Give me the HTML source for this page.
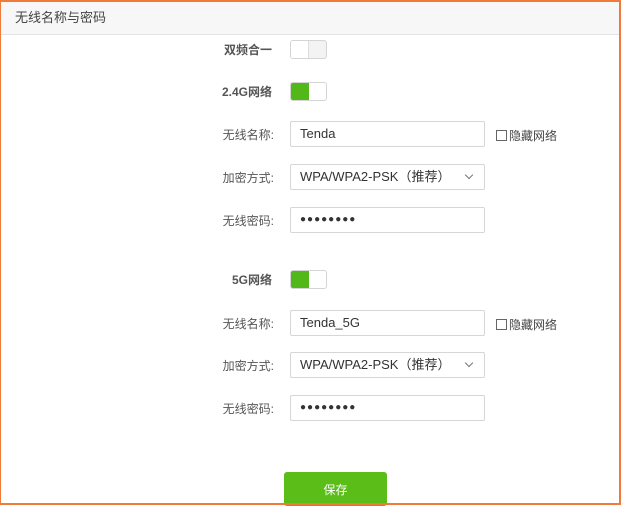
<!DOCTYPE html><html><head><meta charset="utf-8"><style>
*{box-sizing:border-box;margin:0;padding:0}
body{width:621px;height:505px;overflow:hidden;background:#fff;font-family:"Liberation Sans","Noto Sans CJK SC",sans-serif;position:relative}
.frame{position:absolute;left:0;top:0;width:621px;height:505px;border:2px solid #f07a3a;border-left-width:1px}
.hd{position:absolute;left:1px;top:2px;width:618px;height:33px;background:#f7f7f7;border-bottom:1px solid #e4e4e4;font-size:13px;color:#444;line-height:31px;padding-left:14px}
.lb{position:absolute;right:349px;font-size:12px;color:#555;text-align:right;white-space:nowrap}
.b{font-weight:bold;color:#555}
.tg{position:absolute;left:290px;width:37px;height:19px;border:1px solid #d4d4d4;border-radius:3px;background:#f3f3f3}
.tg i{position:absolute;left:0;top:0;width:18px;height:17px;background:#fff;border-right:1px solid #ddd;border-radius:2px 0 0 2px}
.tg.on{background:#fff}.tg.on i{background:#52b81a;border:none}
.in{position:absolute;left:290px;width:195px;height:26px;border:1px solid #d6d6d6;border-radius:2px;font-size:13px;color:#333;line-height:24px;padding-left:9px}
.dots{letter-spacing:1px;font-size:10px;font-weight:bold}
.arr{position:absolute;right:12px;top:7px;width:6px;height:6px;border-right:1px solid #777;border-bottom:1px solid #777;transform:rotate(45deg)}
.hid{position:absolute;left:496px;font-size:12px;color:#444}
.hid span{display:inline-block;width:11px;height:11px;border:1px solid #666;vertical-align:-1px;margin-right:2px}
.btn{position:absolute;left:284px;top:472px;width:103px;height:34px;background:#5bbd18;border-radius:3px;color:#fff;font-size:12px;text-align:center;line-height:36px}
</style></head><body>
<div class="hd">无线名称与密码</div>
<div class="lb b" style="top:41px">双频合一</div>
<div class="tg" style="top:40px"><i></i></div>
<div class="lb b" style="top:83px">2.4G网络</div>
<div class="tg on" style="top:82px"><i></i></div>
<div class="lb" style="top:126px;right:347px">无线名称:</div>
<div class="in" style="top:121px">Tenda</div>
<div class="hid" style="top:127px"><span></span>隐藏网络</div>
<div class="lb" style="top:169px;right:347px">加密方式:</div>
<div class="in" style="top:164px">WPA/WPA2-PSK（推荐）<i class="arr"></i></div>
<div class="lb" style="top:212px;right:347px">无线密码:</div>
<div class="in dots" style="top:207px">●●●●●●●●</div>
<div class="lb b" style="top:271px">5G网络</div>
<div class="tg on" style="top:270px"><i></i></div>
<div class="lb" style="top:315px;right:347px">无线名称:</div>
<div class="in" style="top:310px">Tenda_5G</div>
<div class="hid" style="top:316px"><span></span>隐藏网络</div>
<div class="lb" style="top:357px;right:347px">加密方式:</div>
<div class="in" style="top:352px">WPA/WPA2-PSK（推荐）<i class="arr"></i></div>
<div class="lb" style="top:400px;right:347px">无线密码:</div>
<div class="in dots" style="top:395px">●●●●●●●●</div>
<div class="btn">保存</div>
<div class="frame"></div>
</body></html>
